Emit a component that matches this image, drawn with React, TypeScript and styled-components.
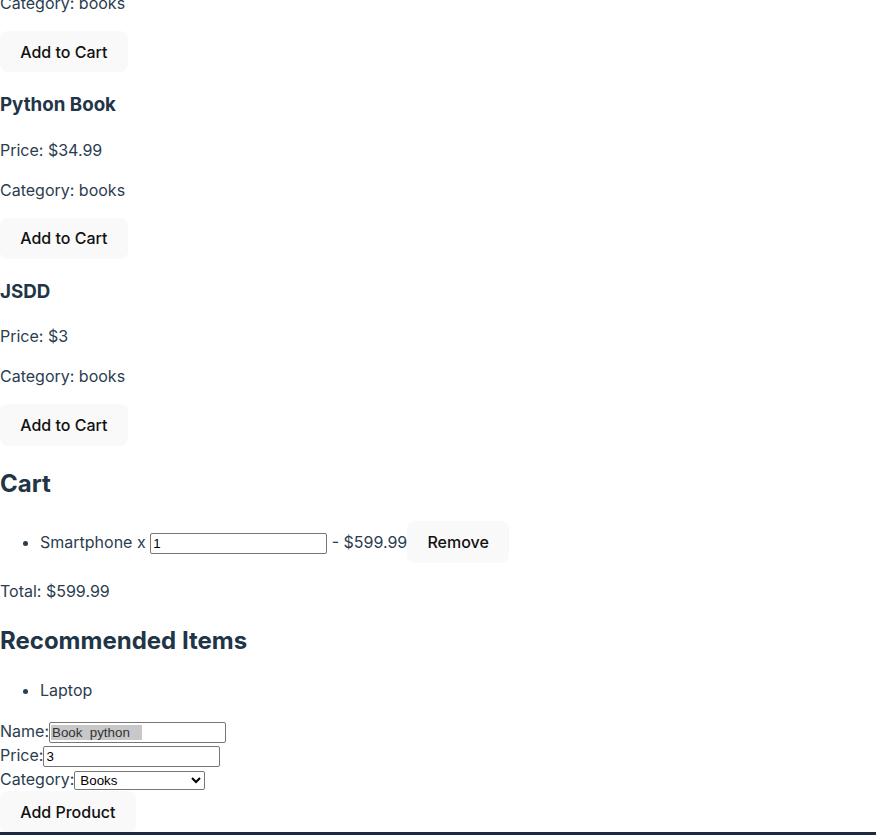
import React from "react";
import styled, { createGlobalStyle } from "styled-components";

const Global = createGlobalStyle`
  html, body { margin: 0; padding: 0; background: #ffffff; }
  body {
    font-family: Inter, "Noto Sans", sans-serif;
    font-size: 16px;
    line-height: 1.5;
    font-weight: 400;
    color: #2b3d4f;
    overflow: hidden;
  }
`;

const Page = styled.div`
  display: flex;
  flex-direction: column;
  align-items: stretch;
  height: 835px;
  overflow: hidden;
`;

const Viewport = styled.div`
  flex: 1;
  min-height: 0;
  overflow: hidden;
`;

const Scrolled = styled.div`
  margin-top: -9px;
  display: flow-root;
`;

const Text = styled.p<{ $first?: boolean }>`
  margin: ${(p) => (p.$first ? "0 0 16px" : "16px 0")};
`;

const ProductTitle = styled.h3`
  font-size: 1.17em;
  font-weight: 700;
  color: #213547;
  margin: 18.72px 0;
`;

const SectionTitle = styled.h2`
  font-size: 1.5em;
  font-weight: 700;
  color: #213547;
  margin: 19.92px 0;
`;

const Button = styled.button`
  border-radius: 8px;
  border: 1px solid transparent;
  padding: 0.6em 1.2em;
  font-size: 1em;
  font-weight: 500;
  font-family: inherit;
  line-height: normal;
  background-color: #f9f9f9;
  color: #111;
  cursor: pointer;
`;

const List = styled.ul`
  margin: 16px 0;
  padding-left: 40px;
`;

const Item = styled.li``;

const Field = styled.input<{ $selected?: boolean }>`
  box-sizing: border-box;
  width: 177px;
  height: 21px;
  padding: 1px 2px;
  border: 1px solid #767676;
  border-radius: 2px;
  font-family: "Liberation Sans", Arial, sans-serif;
  font-size: 13.33px;
  color: ${(p) => (p.$selected ? "#333" : "#000")};
  background: #fff;
  ${(p) =>
    p.$selected
      ? `background-image: linear-gradient(#c8c8c8, #c8c8c8);
         background-repeat: no-repeat;
         background-size: 91px 15px;
         background-position: 1px 2px;`
      : ""}
  vertical-align: baseline;
`;

const Picker = styled.select`
  box-sizing: border-box;
  width: 131px;
  height: 19px;
  padding: 0 0 0 1px;
  border: 1px solid #767676;
  border-radius: 2px;
  font-family: "Liberation Sans", Arial, sans-serif;
  font-size: 13.33px;
  color: #000;
  background: #fff;
`;

const Form = styled.form`
  margin: 0;
  padding-top: 1px;
`;

const Row = styled.div``;

const BottomEdge = styled.div`
  height: 3px;
  background: #1c2a3d;
  flex-shrink: 0;
`;

type P = { name: string; price: string };

const Product = ({ name, price }: P) => (
  <>
    <ProductTitle>{name}</ProductTitle>
    <Text>Price: ${price}</Text>
    <Text>Category: books</Text>
    <Button>Add to Cart</Button>
  </>
);

export default function App() {
  return (
    <>
      <Global />
      <Page>
        <Viewport>
          <Scrolled>
            <Text $first>Category: books</Text>
            <Button>Add to Cart</Button>
            <Product name="Python Book" price="34.99" />
            <Product name="JSDD" price="3" />
            <SectionTitle>Cart</SectionTitle>
            <List>
              <Item>
                Smartphone x <Field defaultValue="1" /> - $599.99
                <Button>Remove</Button>
              </Item>
            </List>
            <Text>Total: $599.99</Text>
            <SectionTitle>Recommended Items</SectionTitle>
            <List>
              <Item>Laptop</Item>
            </List>
            <Form onSubmit={(e) => e.preventDefault()}>
              <Row>
                <label>Name:</label>
                <Field $selected defaultValue="Book  python" />
              </Row>
              <Row>
                <label>Price:</label>
                <Field defaultValue="3" />
              </Row>
              <Row>
                <label>Category:</label>
                <Picker defaultValue="books">
                  <option value="books">Books</option>
                  <option value="electronics">Electronics</option>
                </Picker>
              </Row>
              <Button type="submit">Add Product</Button>
            </Form>
          </Scrolled>
        </Viewport>
        <BottomEdge />
      </Page>
    </>
  );
}
